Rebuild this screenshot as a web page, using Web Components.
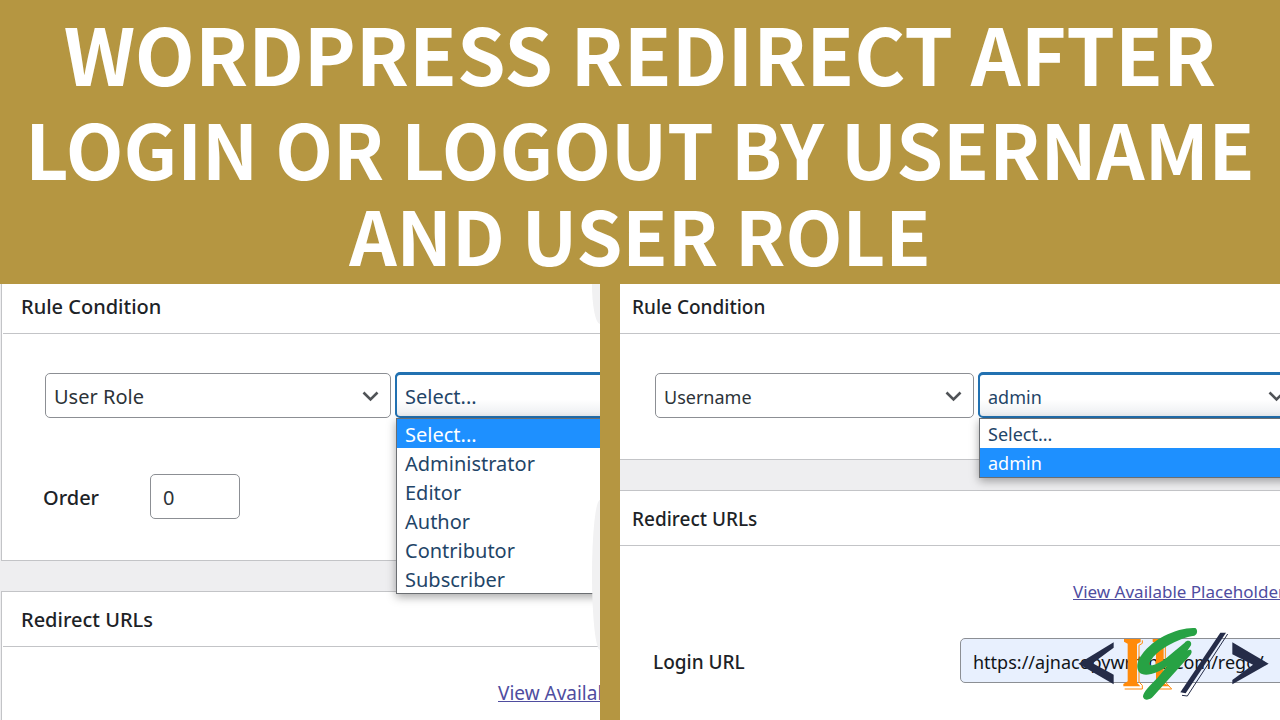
<!DOCTYPE html>
<html lang="en">

<head>
    <meta charset="UTF-8">
    <meta name="viewport" content="width=device-width, initial-scale=1.0">
    <title>WordPress redirect after login or logout</title>
    <style>
        body {
            margin: 0;
            background-color: #b59641;
            font-family: "Noto Sans", "Open Sans", sans-serif;
        }
    </style>
</head>

<body>
    <redirect-page></redirect-page>

    <script>
        const define = (name, html, setup) => {
            customElements.define(name,
                class extends HTMLElement {
                    constructor() {
                        super();
                        const shadowRoot = this.attachShadow({ mode: "open" });
                        shadowRoot.innerHTML = html;
                        if (setup) {
                            setup(this, shadowRoot);
                        }
                    }
                });
        };

        define("page-banner", `
            <style>
                :host {
                    display: block;
                    background-color: #b59641;
                    color: white;
                    text-align: center;
                }

                h1 {
                    margin: 0;
                    padding: 4px 0 12px;
                    font: 700 75px/96px "Noto Sans CJK JP", "Noto Sans", sans-serif;
                }

                span {
                    display: block;
                    white-space: nowrap;
                }

                .lead {
                    font-size: 78px;
                }

                .last {
                    font-size: 74px;
                    line-height: 76px;
                }
            </style>
            <h1>
                <span class="lead">WORDPRESS REDIRECT AFTER</span>
                <span>LOGIN OR LOGOUT BY USERNAME</span>
                <span class="last">AND USER ROLE</span>
            </h1>
        `);

        define("meta-box", `
            <style>
                :host {
                    display: block;
                    box-sizing: border-box;
                    background-color: white;
                    border: 1px solid #c3c4c7;
                    border-width: 1px 0 1px var(--box-edge);
                }

                h2 {
                    margin: 0 0 0 var(--box-edge);
                    padding-top: 2px;
                    padding-left: var(--title-indent);
                    border-bottom: 1px solid #c3c4c7;
                    color: #1d2327;
                    font-size: var(--title-size);
                    font-weight: 500;
                    line-height: 52px;
                }

                .inside {
                    padding-left: var(--inside-indent);
                }
            </style>
            <h2><slot name="title"></slot></h2>
            <div class="inside"><slot></slot></div>
        `);

        define("drop-down", `
            <style>
                :host {
                    display: block;
                    position: relative;
                    flex: 0 0 var(--select-width);
                }

                select {
                    display: block;
                    appearance: none;
                    box-sizing: border-box;
                    width: 100%;
                    height: 45px;
                    margin: 0;
                    padding: 2px 8px 0;
                    border: 1px solid #8c8f94;
                    border-radius: 5px;
                    background-color: white;
                    color: #2c3338;
                    font-family: inherit;
                    font-size: var(--text-size);
                }

                :host([open]) select {
                    border: 2px solid #2271b1;
                    box-shadow: 0 -1px 0 #2271b1;
                    color: #1f4568;
                    background-image: linear-gradient(white 60%, #eceef1);
                }

                svg {
                    position: absolute;
                    top: 18px;
                    right: 12px;
                    width: 17px;
                    height: 11px;
                    pointer-events: none;
                }

                ul {
                    display: none;
                    position: absolute;
                    z-index: 1;
                    top: 45px;
                    left: 1px;
                    right: 1px;
                    margin: 0;
                    padding: 0;
                    border: 1px solid #6b6e72;
                    background-color: white;
                    box-shadow: 0 3px 9px rgba(0, 0, 0, 0.35);
                    color: #1f4568;
                    font-size: var(--text-size);
                    line-height: 27px;
                    list-style: none;
                }

                :host([open]) ul {
                    display: block;
                }

                li {
                    padding-top: 2px;
                    padding-left: 8px;
                }

                li[aria-selected="true"] {
                    background-color: #1e90ff;
                    color: white;
                }
            </style>
            <select></select>
            <svg viewBox="0 0 17 11"><path d="M1.5 1.5 8.5 8.5 15.5 1.5" fill="none" stroke="#505357" stroke-width="2.6"/></svg>
            <ul role="listbox"></ul>
        `, (host, root) => {
            const select = root.querySelector("select");
            const list = root.querySelector("ul");
            const options = host.getAttribute("options").split(",");
            select.setAttribute("aria-label", host.getAttribute("label"));
            list.setAttribute("aria-label", host.getAttribute("label"));
            options.forEach((text) => {
                select.add(new Option(text));
            });
            select.value = host.getAttribute("value");
            if (host.hasAttribute("open")) {
                options.forEach((text) => {
                    const li = document.createElement("li");
                    li.setAttribute("role", "option");
                    li.setAttribute("aria-selected", text == select.value);
                    li.textContent = text;
                    list.appendChild(li);
                });
            }
        });

        define("text-field", `
            <style>
                :host {
                    display: flex;
                    align-items: center;
                }

                label {
                    flex: 0 0 var(--label-width);
                    padding-top: 2px;
                    color: #1d2327;
                    font-size: var(--title-size);
                    font-weight: 500;
                    white-space: nowrap;
                }

                input {
                    box-sizing: border-box;
                    flex: 0 0 var(--input-width);
                    min-width: 0;
                    height: 45px;
                    margin: 0;
                    padding: 2px 12px 0;
                    border: 1px solid #8c8f94;
                    border-radius: 5px;
                    background-color: var(--input-color, white);
                    color: var(--input-text, #2c3338);
                    font-family: inherit;
                    font-size: var(--text-size);
                }
            </style>
            <label for="field"></label>
            <input id="field" type="text">
        `, (host, root) => {
            root.querySelector("label").textContent = host.getAttribute("label");
            root.querySelector("input").value = host.getAttribute("value");
        });

        define("code-logo", `
            <style>
                :host {
                    display: block;
                    width: 210px;
                    height: 90px;
                }
            </style>
            <svg width="210" height="90" viewBox="0 0 630 270" role="img" aria-label="HG code">
                <g fill="#252c48">
                    <path d="M131 67 25 131 131 193V164L68 130 131 83Z"/>
                    <path d="M487 67 596 131 487 193V180L549 134 487 103Z"/>
                    <path d="M451 38H468L347 220 331 217Z"/>
                </g>
                <path d="M473 42 352 228 336 226" fill="none" stroke="#252c48" stroke-width="3"/>
                <path d="M162 57H212V66L201 72V188L211 199H160V192L173 184V71L162 65Z" fill="#ff8a0a"/>
                <path d="M248 57H290V66L281 72V188L298 199H248L258 184V71L248 65Z" fill="#ff8a0a"/>
                <path d="M217 61V70L207 76V186L217 196V207H164M294 60V70L286 76V186L305 207H248" fill="none" stroke="#ff8a0a" stroke-width="3"/>
                <path d="M376 24C384 30 383 43 373 47 325 54 252 92 238 130 237 142 262 134 290 113L344 68C352 58 367 62 363 76L352 92C364 84 369 94 361 105L250 229C240 241 222 243 219 230 219 217 240 196 262 174L292 138C262 161 222 173 207 156 186 126 232 74 282 48 315 31 352 22 376 24Z" fill="#27a244"/>
            </svg>
        `);

        define("redirect-page", `
            <style>
                :host {
                    display: grid;
                    grid-template-rows: auto 1fr;
                    height: 100vh;
                    overflow: hidden;
                }

                main {
                    display: grid;
                    grid-template-columns: minmax(0, 600fr) minmax(0, 660fr);
                    gap: 20px;
                    min-height: 0;
                }

                .panel {
                    display: flex;
                    flex-direction: column;
                    position: relative;
                    overflow: hidden;
                    background-color: #eeeef0;
                }

                .role {
                    --box-edge: 1px;
                    --title-indent: 18px;
                    --inside-indent: 41px;
                    --title-size: 20px;
                    --text-size: 20px;
                    --link-size: 19px;
                    --select-width: 346px;
                    --label-width: 107px;
                    --input-width: 90px;
                    --link-indent: 455px;
                    padding-left: 1px;
                }

                .user {
                    --box-edge: 0px;
                    --title-indent: 12px;
                    --inside-indent: 33px;
                    --title-size: 19px;
                    --text-size: 18px;
                    --link-size: 17px;
                    --select-width: 319px;
                    --label-width: 307px;
                    --input-width: 340px;
                    --input-color: #e8f0fe;
                    --input-text: #101418;
                    --link-indent: 420px;
                }

                /* the first box runs up under the banner */
                meta-box:first-child {
                    flex: none;
                    margin: -6px 0 30px;
                }

                meta-box:nth-child(2) {
                    flex: 1 0 auto;
                }

                .rule {
                    display: grid;
                    gap: 56px;
                    padding: 39px 0 41px;
                }

                .selects {
                    display: flex;
                    gap: 4px;
                    padding-left: 2px;
                }

                .urls {
                    display: grid;
                    gap: 31px;
                    padding: 31px 0 80px;
                }

                a {
                    margin-left: var(--link-indent);
                    color: #4f4d9f;
                    font-size: var(--link-size);
                    line-height: 30px;
                    white-space: nowrap;
                }

                .curve {
                    position: absolute;
                    z-index: 2;
                    right: 0;
                    top: 216px;
                    width: 8px;
                    height: 150px;
                    border-radius: 100% 0 0 100% / 50%;
                    background-color: #f1f1f2;
                }

                .curve.top {
                    top: 0;
                    height: 40px;
                    border-radius: 0 0 0 100%;
                }

                code-logo {
                    position: absolute;
                    right: 0;
                    bottom: 10px;
                }
            </style>
            <page-banner></page-banner>
            <main>
                <section class="panel role">
                    <meta-box>
                        <span slot="title">Rule Condition</span>
                        <div class="rule">
                            <div class="selects">
                                <drop-down label="Condition" options="User Role,Username" value="User Role"></drop-down>
                                <drop-down open label="Role" value="Select..."
                                    options="Select...,Administrator,Editor,Author,Contributor,Subscriber"></drop-down>
                            </div>
                            <text-field label="Order" value="0"></text-field>
                        </div>
                    </meta-box>
                    <meta-box>
                        <span slot="title">Redirect URLs</span>
                        <div class="urls">
                            <a href="#placeholders">View Available Placeholders</a>
                        </div>
                    </meta-box>
                    <div class="curve top"></div>
                    <div class="curve"></div>
                </section>
                <section class="panel user">
                    <meta-box>
                        <span slot="title">Rule Condition</span>
                        <div class="rule">
                            <div class="selects">
                                <drop-down label="Condition" options="User Role,Username" value="Username"></drop-down>
                                <drop-down open label="User" options="Select...,admin" value="admin"></drop-down>
                            </div>
                        </div>
                    </meta-box>
                    <meta-box>
                        <span slot="title">Redirect URLs</span>
                        <div class="urls">
                            <a href="#placeholders">View Available Placeholders</a>
                            <text-field label="Login URL" value="https://ajnacopywriting.com/rego/"></text-field>
                        </div>
                    </meta-box>
                    <code-logo></code-logo>
                </section>
            </main>
        `);
    </script>
</body>

</html>
